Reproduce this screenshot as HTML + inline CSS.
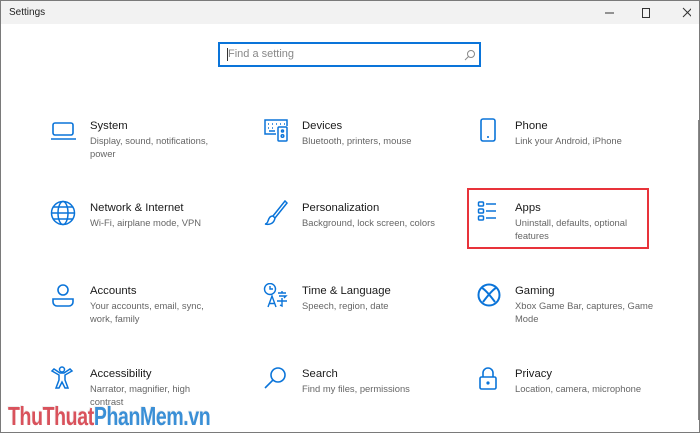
<!DOCTYPE html>
<html><head><meta charset="utf-8"><style>
*{margin:0;padding:0;box-sizing:border-box}
body{width:700px;height:433px;overflow:hidden;background:#fff;font-family:"Liberation Sans",sans-serif;position:relative}
.win{position:absolute;left:0;top:0;width:700px;height:433px;border:1px solid #7a7a7a;}
.tb{position:absolute;left:1px;top:1px;width:698px;height:23px;background:#f2f2f2;font-size:10px;color:#222}
.tb .t{position:absolute;left:8px;top:6px}
.search{position:absolute;left:218px;top:42px;width:263px;height:25px;border:2px solid #0a74d9;}
.search span{position:absolute;left:8px;top:4px;font-size:11px;color:#888}
.search i{position:absolute;left:7px;top:4px;width:1px;height:13px;background:#333}
.it{position:absolute}
.it svg{position:absolute;left:0;top:0}
.it b{position:absolute;font-weight:normal;font-size:11.3px;color:#1a1a1a;white-space:nowrap}
.it p{position:absolute;font-size:9.4px;color:#666;line-height:12.5px;width:130px}
.red{position:absolute;left:467px;top:188px;width:182px;height:61px;border:2px solid #e8333a}
.wm{position:absolute;left:8px;top:401px;font-size:26px;font-weight:bold;transform:scaleX(0.75);transform-origin:left top;letter-spacing:-0.5px;text-shadow:1px 1px 0 #fff,-1px -1px 0 #eee;white-space:nowrap}
</style></head><body>
<div class="win"></div>
<div class="tb"><span class="t">Settings</span>
<svg style="position:absolute;left:600px;top:6px" width="90" height="12" fill="none" stroke="#333" stroke-width="1">
<line x1="4" y1="6" x2="13" y2="6"/><rect x="41.5" y="1.5" width="7" height="9"/><line x1="82" y1="1" x2="91" y2="10"/><line x1="91" y1="1" x2="82" y2="10"/></svg></div>
<div style="position:absolute;left:698px;top:120px;width:1px;height:300px;background:#888"></div>
<div class="search"><i></i><span>Find a setting</span>
<svg style="position:absolute;left:244px;top:5px" width="12" height="12" fill="none" stroke="#888" stroke-width="1"><circle cx="7" cy="5" r="3.5"/><line x1="4.5" y1="7.5" x2="1" y2="11"/></svg></div>

<div class="red"></div>

<div class="it" style="left:50px;top:118px"><svg width="28" height="26" fill="none" stroke="#0a74d9" stroke-width="1.6"><rect x="3" y="5" width="20" height="12" rx="2"/><line x1="1" y1="21" x2="26" y2="21"/></svg><b style="left:40px;top:2px">System</b><p style="left:40px;top:17px">Display, sound, notifications, power</p></div>
<div class="it" style="left:263px;top:118px"><svg width="28" height="26" fill="none" stroke="#0a74d9" stroke-width="1.5"><path d="M13 16H2V2h22v6"/><path d="M5 6h1M9 6h1M13 6h1M17 6h1M21 6h1M5 10h1M9 10h1M6 13h6"/><rect x="15" y="9" width="9" height="14" rx="1"/><circle cx="19.5" cy="13" r="1"/><circle cx="19.5" cy="18" r="1.3"/></svg><b style="left:39px;top:2px">Devices</b><p style="left:39px;top:17px;width:150px">Bluetooth, printers, mouse</p></div>
<div class="it" style="left:477px;top:118px"><svg width="28" height="26" fill="none" stroke="#0a74d9" stroke-width="1.6"><rect x="4" y="1" width="14" height="22" rx="2"/><line x1="10" y1="19" x2="12" y2="19"/></svg><b style="left:38px;top:2px">Phone</b><p style="left:38px;top:17px;width:150px">Link your Android, iPhone</p></div>

<div class="it" style="left:50px;top:200px"><svg width="28" height="26" fill="none" stroke="#0a74d9" stroke-width="1.5"><circle cx="13" cy="13" r="11.5"/><ellipse cx="13" cy="13" rx="5" ry="11.5"/><line x1="1.5" y1="13" x2="24.5" y2="13"/><path d="M3.5 7h19M3.5 19h19"/></svg><b style="left:40px;top:2px">Network &amp; Internet</b><p style="left:40px;top:17px;width:150px">Wi-Fi, airplane mode, VPN</p></div>
<div class="it" style="left:263px;top:200px"><svg width="28" height="26" fill="none" stroke="#0a74d9" stroke-width="1.5"><path d="M22 1 L10 16 L12 18 L24 3 Z"/><path d="M10 16c-3 0-4 2-5 5-.5 2-2 3-3 3 4 1 9 0 10-6"/></svg><b style="left:39px;top:2px">Personalization</b><p style="left:39px;top:17px;width:160px">Background, lock screen, colors</p></div>
<div class="it" style="left:477px;top:200px"><svg width="28" height="26" fill="none" stroke="#0a74d9" stroke-width="1.5"><rect x="1.5" y="2" width="5" height="4" rx="1"/><rect x="1.5" y="9" width="5" height="4" rx="1"/><rect x="1.5" y="16" width="5" height="4" rx="1"/><path d="M9 4h10M9 11h10M9 18h10"/></svg><b style="left:38px;top:2px">Apps</b><p style="left:38px;top:17px;width:125px">Uninstall, defaults, optional features</p></div>

<div class="it" style="left:50px;top:283px"><svg width="28" height="26" fill="none" stroke="#0a74d9" stroke-width="1.6"><circle cx="13" cy="7" r="5"/><path d="M3 16h20v3a4 4 0 0 1-4 4H7a4 4 0 0 1-4-4z"/></svg><b style="left:40px;top:2px">Accounts</b><p style="left:40px;top:17px">Your accounts, email, sync, work, family</p></div>
<div class="it" style="left:263px;top:283px"><svg width="30" height="26" fill="none" stroke="#0a74d9" stroke-width="1.4"><circle cx="7" cy="6" r="5.5"/><path d="M7 3v3h3"/><path d="M5 24l4-11 4 11M6.3 20.5h5.4"/><path d="M15 10h8M19 8v2M16 13h7l-2 2M19 15v8l-2-1M14 18h10"/></svg><b style="left:39px;top:2px">Time &amp; Language</b><p style="left:39px;top:17px;width:150px">Speech, region, date</p></div>
<div class="it" style="left:477px;top:283px"><svg width="28" height="26" fill="none" stroke="#0a74d9" stroke-width="2"><circle cx="12" cy="12" r="10.5"/><path d="M5 5c4 2 10 10 13 14M19 5c-4 2-10 10-13 14"/></svg><b style="left:38px;top:2px">Gaming</b><p style="left:38px;top:17px;width:140px">Xbox Game Bar, captures, Game Mode</p></div>

<div class="it" style="left:50px;top:366px"><svg width="28" height="26" fill="none" stroke="#0a74d9" stroke-width="1.5"><circle cx="12" cy="3.5" r="2.5"/><path d="M2 5l7 4v5l-3 8h3l3-6 3 6h3l-3-8V9l7-4-2-2-6 4h-4L4 3z"/></svg><b style="left:40px;top:2px">Accessibility</b><p style="left:40px;top:17px;width:120px">Narrator, magnifier, high contrast</p></div>
<div class="it" style="left:263px;top:366px"><svg width="28" height="26" fill="none" stroke="#0a74d9" stroke-width="1.6"><circle cx="15" cy="9" r="7"/><line x1="10" y1="14" x2="2" y2="22"/></svg><b style="left:39px;top:2px">Search</b><p style="left:39px;top:17px;width:150px">Find my files, permissions</p></div>
<div class="it" style="left:477px;top:366px"><svg width="28" height="26" fill="none" stroke="#0a74d9" stroke-width="1.6"><path d="M6 11V7a5 5 0 0 1 10 0v4"/><rect x="3" y="11" width="16" height="12" rx="1.5"/><circle cx="11" cy="17" r=".8" fill="#0a74d9"/></svg><b style="left:38px;top:2px">Privacy</b><p style="left:38px;top:17px;width:150px">Location, camera, microphone</p></div>

<div class="wm"><span style="color:#d9525c">ThuThuat</span><span style="color:#3a8fd6">PhanMem.vn</span></div>
</body></html>
